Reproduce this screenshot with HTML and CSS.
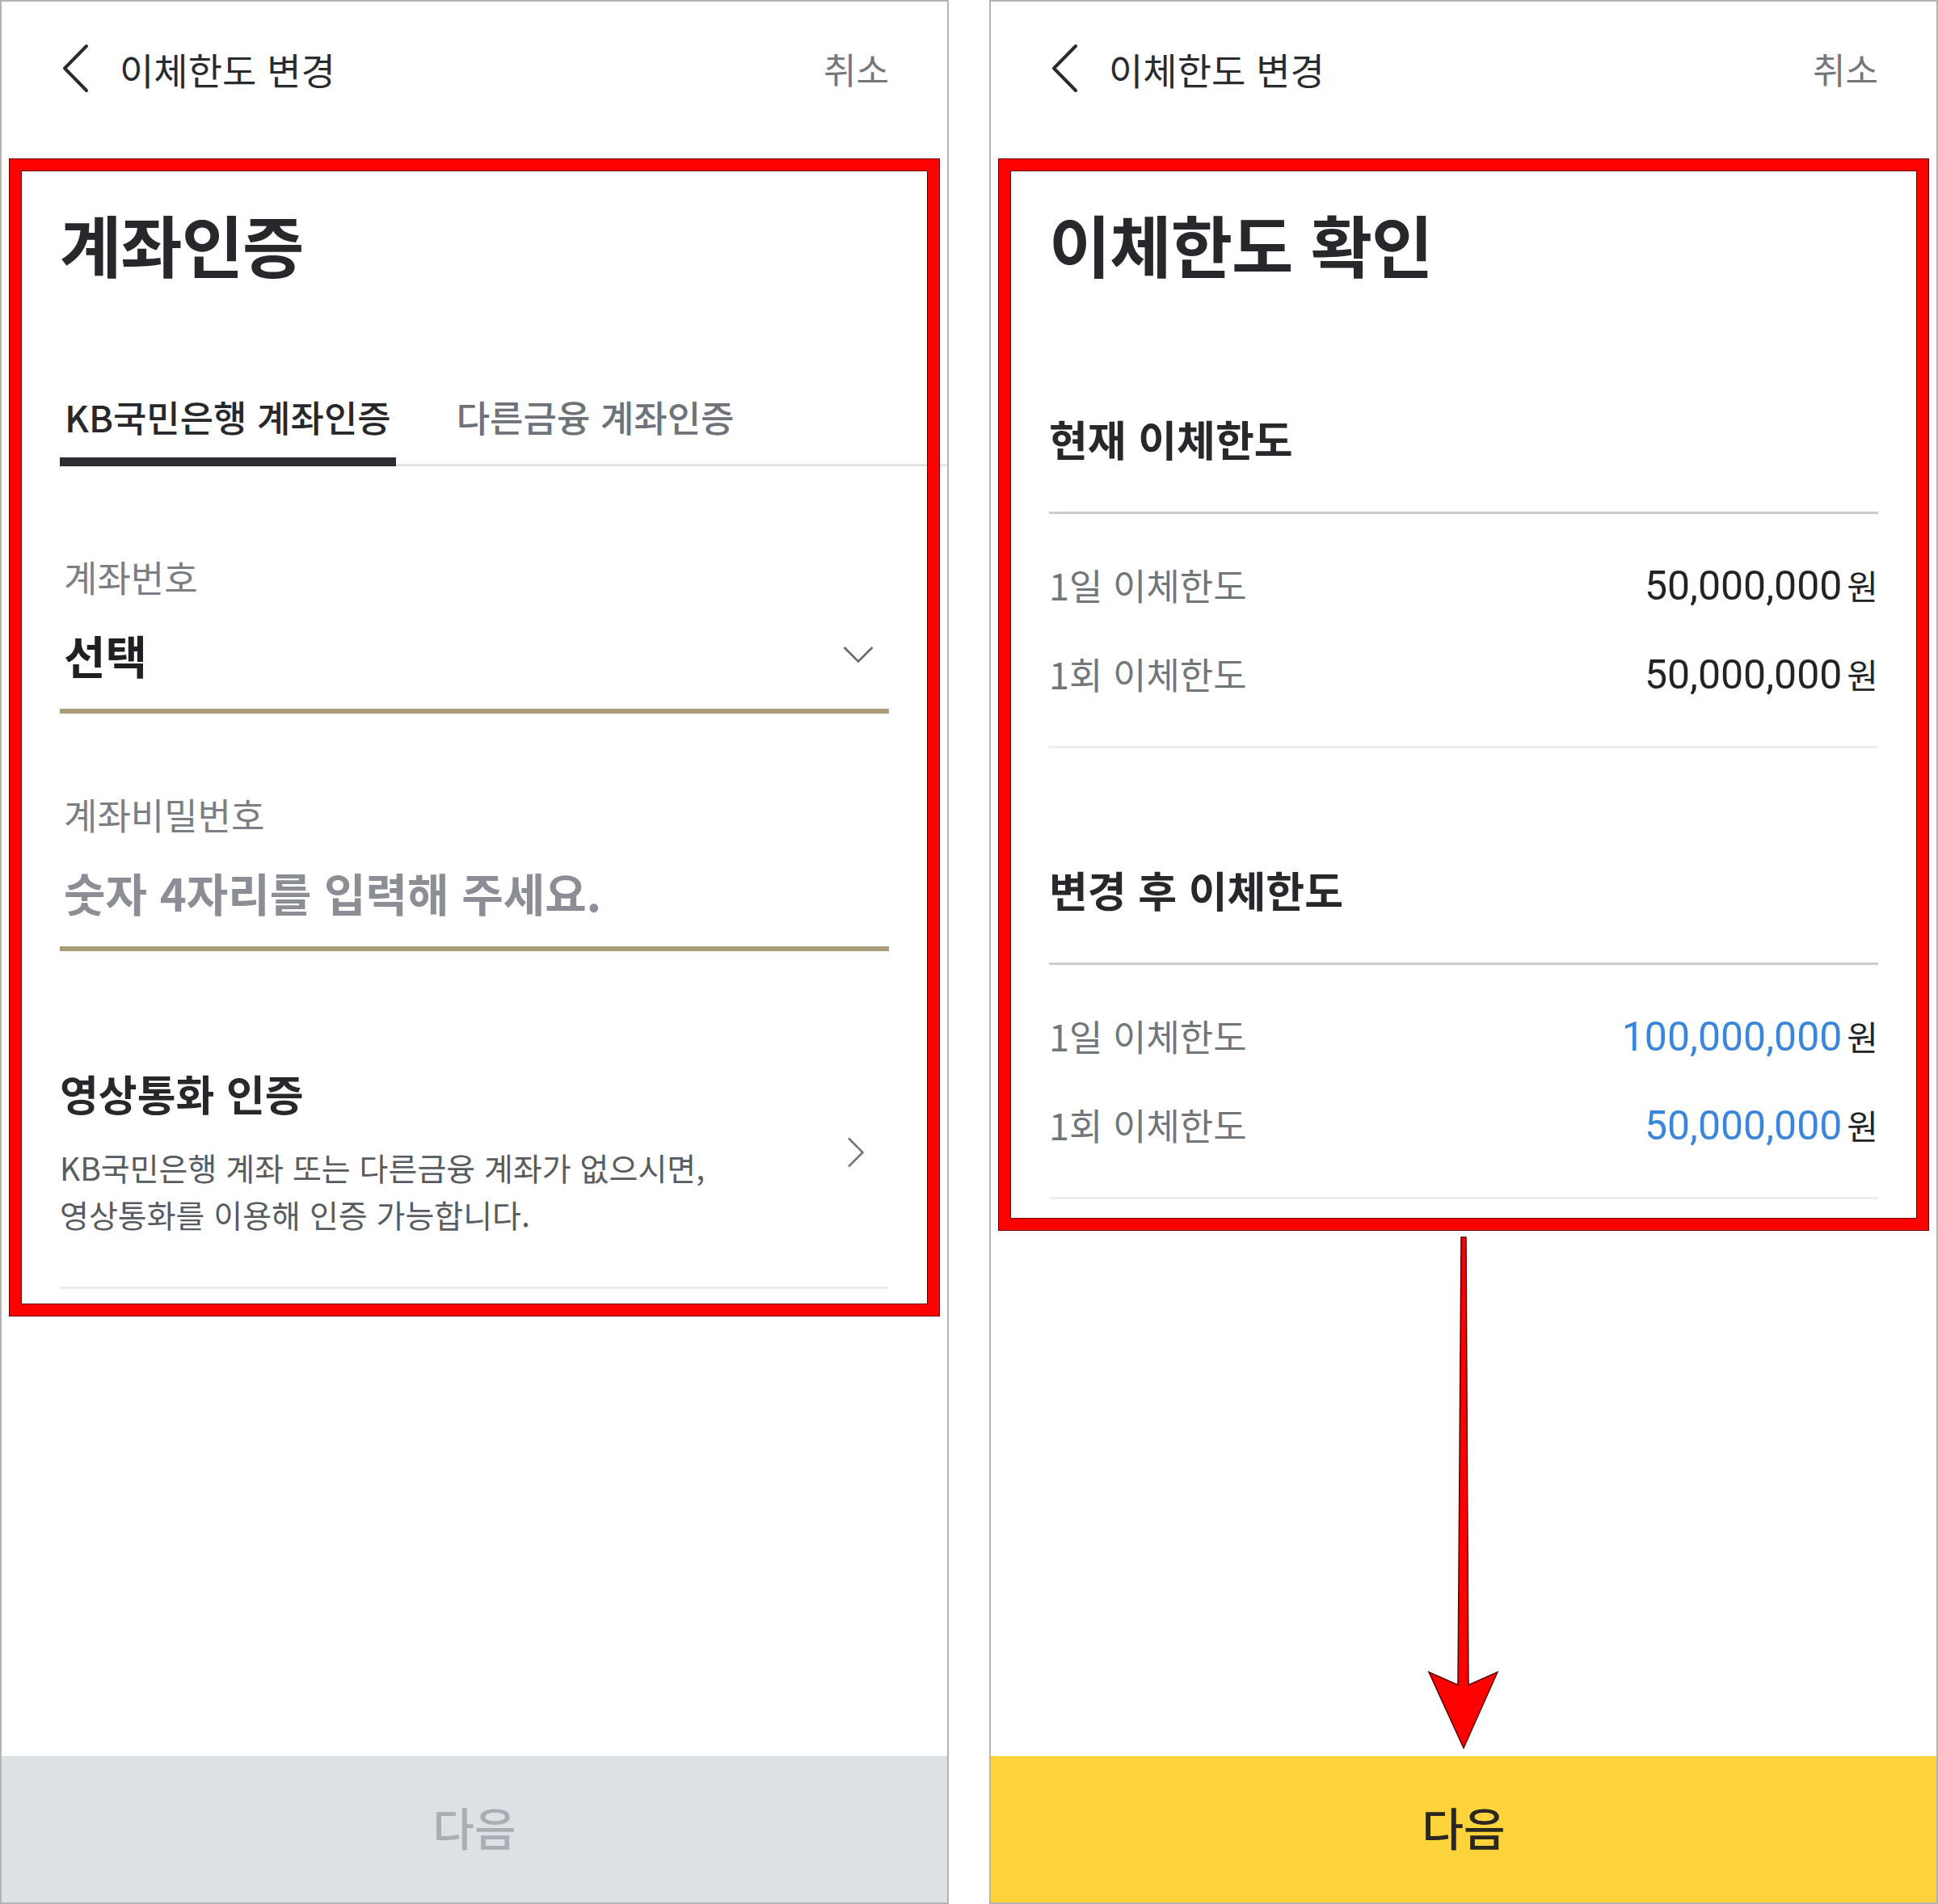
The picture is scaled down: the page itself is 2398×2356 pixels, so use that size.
FILE: index.html
```html
<!DOCTYPE html>
<html lang="ko">
<head>
    <meta charset="UTF-8">
    <meta name="viewport" content="width=device-width, initial-scale=1.0">
    <title>이체한도 변경</title>
    <link rel="stylesheet" href="styles.css">
</head>
<body>
    <div class="screens">

        <!-- step 1: account check -->
        <section class="phone">
            <header class="topbar">
                <div class="topbar-left">
                    <svg class="back" viewBox="0 0 36 64"><polyline points="33,4 6,31.5 33,59"/></svg>
                    <span class="topbar-title">이체한도 변경</span>
                </div>
                <span class="cancel">취소</span>
            </header>

            <main class="content">
                <h1 class="page-title">계좌인증</h1>

                <div class="tabs">
                    <span class="tab active">KB국민은행 계좌인증</span>
                    <span class="tab">다른금융 계좌인증</span>
                </div>

                <div class="field">
                    <div class="field-label">계좌번호</div>
                    <div class="field-input">
                        <span class="select-value">선택</span>
                        <svg class="chevron-down" viewBox="0 0 40 24"><polyline points="2.5,3 20,20.5 37.5,3"/></svg>
                    </div>
                </div>

                <div class="field">
                    <div class="field-label">계좌비밀번호</div>
                    <div class="field-input">
                        <span class="placeholder">숫자 4자리를 입력해 주세요.</span>
                    </div>
                </div>

                <div class="video">
                    <div>
                        <div class="video-title">영상통화 인증</div>
                        <p class="video-desc">KB국민은행 계좌 또는 다른금융 계좌가 없으시면,<br>영상통화를 이용해 인증 가능합니다.</p>
                    </div>
                    <svg class="chevron-right" viewBox="0 0 24 40"><polyline points="3,2.5 20.5,20 3,37.5"/></svg>
                </div>
            </main>

            <button class="next-btn">다음</button>
            <div class="mark mark-auth"></div>
        </section>

        <!-- step 2: limit check -->
        <section class="phone">
            <header class="topbar">
                <div class="topbar-left">
                    <svg class="back" viewBox="0 0 36 64"><polyline points="33,4 6,31.5 33,59"/></svg>
                    <span class="topbar-title">이체한도 변경</span>
                </div>
                <span class="cancel">취소</span>
            </header>

            <main class="content">
                <h1 class="page-title">이체한도 확인</h1>

                <h2 class="limit-heading">현재 이체한도</h2>
                <div class="limit-list">
                    <div class="limit-row">
                        <span class="limit-label">1일 이체한도</span>
                        <span class="limit-value"><span class="num">50,000,000</span><span class="won">원</span></span>
                    </div>
                    <div class="limit-row">
                        <span class="limit-label">1회 이체한도</span>
                        <span class="limit-value"><span class="num">50,000,000</span><span class="won">원</span></span>
                    </div>
                </div>

                <h2 class="limit-heading second">변경 후 이체한도</h2>
                <div class="limit-list">
                    <div class="limit-row">
                        <span class="limit-label">1일 이체한도</span>
                        <span class="limit-value changed"><span class="num">100,000,000</span><span class="won">원</span></span>
                    </div>
                    <div class="limit-row">
                        <span class="limit-label">1회 이체한도</span>
                        <span class="limit-value changed"><span class="num">50,000,000</span><span class="won">원</span></span>
                    </div>
                </div>
            </main>

            <button class="next-btn active">다음</button>
            <div class="mark mark-limit"></div>
            <svg class="arrow" width="100" height="645" viewBox="0 0 100 645">
                <polygon points="48,6 54,6 57,560 93,544 51,638 8,544 44,560"/>
            </svg>
        </section>

    </div>
</body>
</html>
```

FILE: styles.css
```css
/* Global styles */
* {
    margin: 0;
    padding: 0;
    box-sizing: border-box;
}

body {
    background: #fff;
    font-family: "Noto Sans CJK KR", "Noto Sans", sans-serif;
    color: #26282b;
}

.screens {
    display: flex;
    gap: 50px;
    width: 2398px;
    height: 2356px;
}

.phone {
    position: relative;
    width: 1174px;
    height: 2356px;
    border: 2px solid #b4b4b4;
    background: #fff;
    display: flex;
    flex-direction: column;
}

/* top bar */
.topbar {
    height: 166px;
    padding: 0 72px;
    display: flex;
    align-items: center;
    justify-content: space-between;
}

.topbar-left {
    display: flex;
    align-items: center;
    gap: 38px;
}

.back {
    width: 36px;
    height: 64px;
    fill: none;
    stroke: #2a2b2e;
    stroke-width: 4;
    stroke-linecap: round;
    stroke-linejoin: round;
}

.topbar-title {
    font-size: 46px;
    line-height: 60px;
    color: #2a2b2e;
}

.cancel {
    font-size: 44px;
    line-height: 60px;
    color: #74777c;
}

.content {
    padding: 0 72px;
    display: flex;
    flex-direction: column;
}

.page-title {
    margin-top: 83px;
    font-size: 83px;
    line-height: 100px;
    font-weight: 700;
    color: #26282b;
    letter-spacing: -1px;
}

/* tabs */
.tabs {
    margin-top: 135px;
    margin-right: -72px;
    display: flex;
    gap: 69px;
    border-bottom: 3px solid #e4e4e4;
}

.tab {
    padding: 0 6px 20px;
    font-size: 45px;
    line-height: 60px;
    font-weight: 500;
    color: #6e737a;
}

.tab.active {
    color: #26282b;
    border-bottom: 11px solid #2d2e33;
    margin-bottom: -3px;
}

/* form fields */
.field {
    margin-top: 109px;
}

.field + .field {
    margin-top: 97px;
}

.field-label {
    padding-left: 5px;
    font-size: 45px;
    line-height: 56px;
    color: #7b7e84;
}

.field-input {
    margin-top: 28px;
    padding-left: 5px;
    padding-bottom: 27px;
    border-bottom: 6px solid #a99b78;
    display: flex;
    align-items: center;
    justify-content: space-between;
}

.select-value {
    font-size: 56px;
    line-height: 80px;
    font-weight: 700;
    color: #1f2023;
}

.placeholder {
    font-size: 56px;
    line-height: 80px;
    font-weight: 600;
    color: #8b8f95;
}

.chevron-down {
    width: 40px;
    height: 24px;
    margin-right: 18px;
    fill: none;
    stroke: #66696e;
    stroke-width: 2.6;
}

/* video call */
.video {
    margin-top: 144px;
    padding-bottom: 61px;
    border-bottom: 3px solid #ededed;
    display: flex;
    align-items: center;
    justify-content: space-between;
}

.video-title {
    font-size: 52px;
    line-height: 64px;
    font-weight: 700;
    color: #26282b;
}

.video-desc {
    margin-top: 30px;
    font-size: 39px;
    line-height: 58px;
    color: #585c62;
}

.chevron-right {
    width: 24px;
    height: 40px;
    margin-right: 29px;
    fill: none;
    stroke: #74777c;
    stroke-width: 2.6;
}

/* limits */
.limit-heading {
    margin-top: 160px;
    padding-bottom: 58px;
    border-bottom: 3px solid #cacccf;
    font-size: 52px;
    line-height: 64px;
    font-weight: 700;
    color: #26282b;
}

.limit-heading.second {
    margin-top: 143px;
}

.limit-list {
    padding: 32px 0 35px;
    border-bottom: 3px solid #eeeeee;
}

.limit-row {
    height: 110px;
    display: flex;
    align-items: center;
    justify-content: space-between;
}

.limit-label {
    font-size: 45px;
    color: #72767b;
}

.limit-value {
    font-family: Roboto, "Noto Sans CJK KR", sans-serif;
    font-size: 50px;
    color: #222326;
}

.limit-value .won {
    font-family: "Noto Sans CJK KR", sans-serif;
    font-size: 42px;
    margin-left: 6px;
}

.limit-value.changed .num {
    color: #3a86dc;
}

/* bottom button */
.next-btn {
    margin-top: auto;
    height: 181px;
    width: 100%;
    padding-bottom: 8px;
    border: none;
    background: #dee1e4;
    color: #a9aeb5;
    font-family: "Noto Sans CJK KR", sans-serif;
    font-size: 56px;
    font-weight: 500;
}

.next-btn.active {
    background: #fcd33b;
    color: #2a2720;
}

/* red annotation marks */
.mark {
    position: absolute;
    left: 10px;
    top: 195px;
    width: 1150px;
    border: 14px solid #ff0000;
    box-shadow: 0 0 0 1px #6a0000, inset 0 0 0 1px #6a0000;
    pointer-events: none;
}

.mark-auth {
    height: 1431px;
}

.mark-limit {
    height: 1325px;
}

.arrow {
    position: absolute;
    left: 534px;
    top: 1523px;
    fill: #ff0000;
    stroke: #5a0000;
    stroke-width: 1.5;
}
```
